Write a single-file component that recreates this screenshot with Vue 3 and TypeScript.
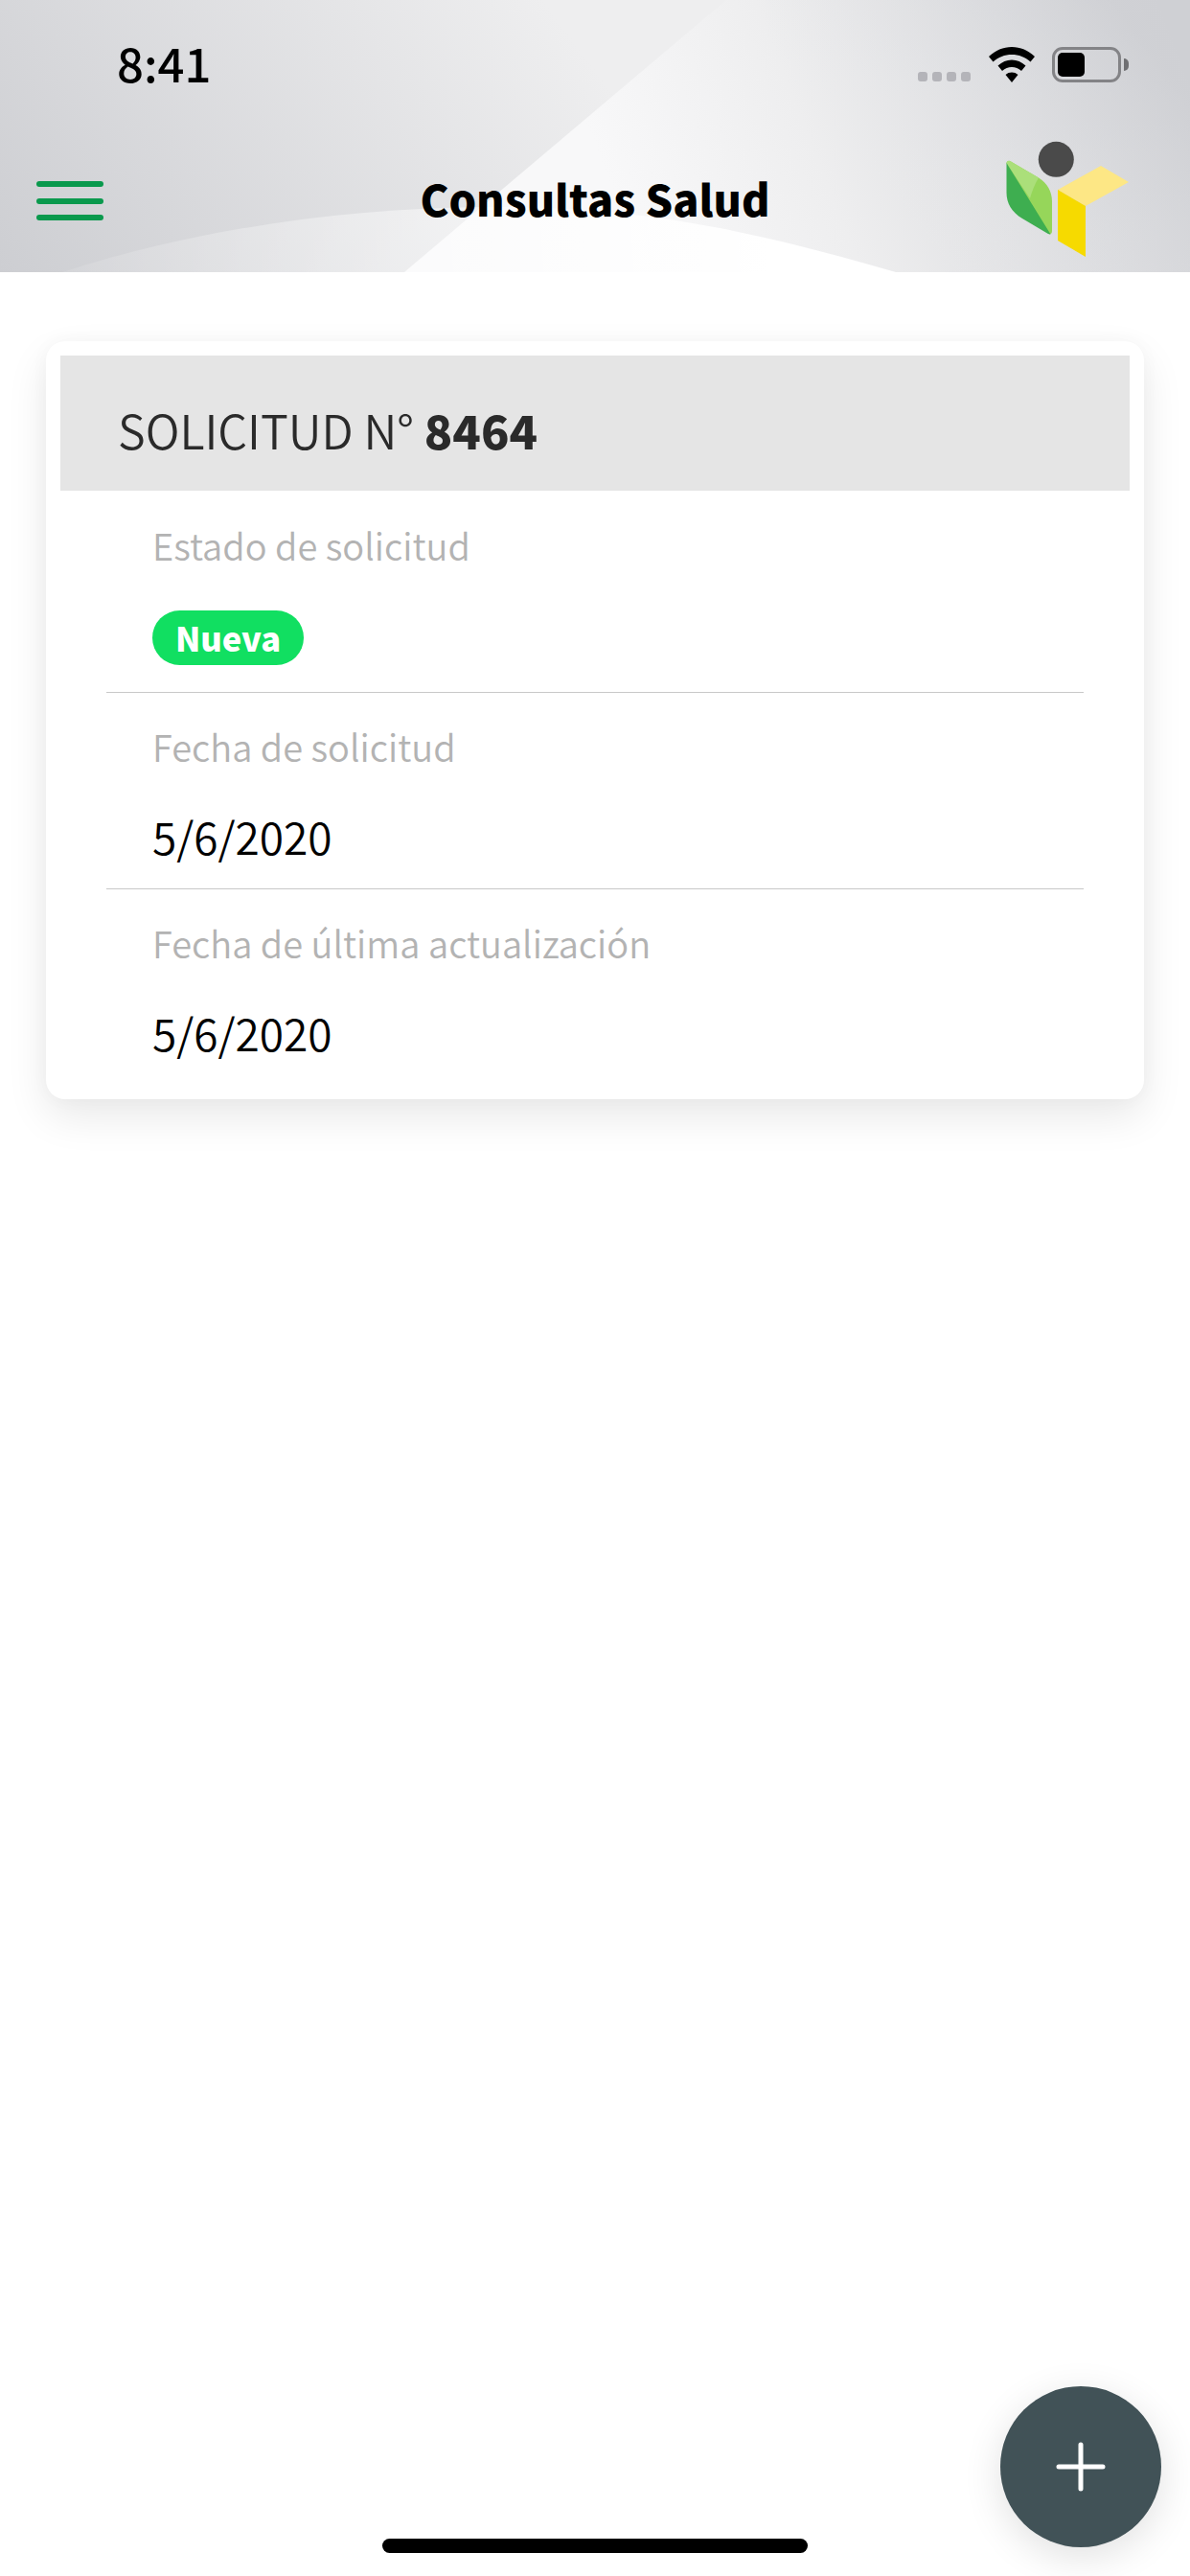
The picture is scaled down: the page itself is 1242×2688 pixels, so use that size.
<script setup lang="ts">
interface Field {
  label: string;
  value?: string;
  badge?: string;
}

const fields: Field[] = [
  { label: 'Estado de solicitud', badge: 'Nueva' },
  { label: 'Fecha de solicitud', value: '5/6/2020' },
  { label: 'Fecha de última actualización', value: '5/6/2020' },
];
</script>

<template>
  <div class="screen">
    <header class="header">
      <svg class="header-bg" width="1242" height="284" viewBox="0 0 1242 284" aria-hidden="true">
        <defs>
          <linearGradient id="bgLeft" gradientUnits="userSpaceOnUse" x1="0" y1="284" x2="500" y2="-90">
            <stop offset="0" stop-color="#cdced2" />
            <stop offset="1" stop-color="#eeeeef" />
          </linearGradient>
          <linearGradient id="bgRight" gradientUnits="userSpaceOnUse" x1="640" y1="200" x2="1200" y2="-20">
            <stop offset="0" stop-color="#f8f8f9" />
            <stop offset="0.35" stop-color="#eeeeef" />
            <stop offset="1" stop-color="#cfd0d4" />
          </linearGradient>
          <linearGradient id="bgBottomRight" gradientUnits="userSpaceOnUse" x1="1242" y1="100" x2="1000" y2="300">
            <stop offset="0" stop-color="#cfd0d4" stop-opacity="0.75" />
            <stop offset="1" stop-color="#ecedef" stop-opacity="0" />
          </linearGradient>
          <linearGradient id="swoosh" gradientUnits="userSpaceOnUse" x1="70" y1="284" x2="800" y2="240">
            <stop offset="0" stop-color="#ffffff" stop-opacity="0.1" />
            <stop offset="0.55" stop-color="#ffffff" stop-opacity="0.5" />
            <stop offset="1" stop-color="#ffffff" stop-opacity="1" />
          </linearGradient>
        </defs>
        <rect width="1242" height="284" fill="url(#bgLeft)" />
        <polygon points="758,0 1242,0 1242,284 422,284" fill="url(#bgRight)" />
        <rect x="800" y="0" width="442" height="284" fill="url(#bgBottomRight)" />
        <path d="M65 284C200 240 360 216 520 216C680 216 800 245 935 284Z" fill="url(#swoosh)" />
      </svg>

      <div class="status-bar">
        <span class="time">8:41</span>
        <div class="status-icons">
          <div class="signal">
            <i></i><i></i><i></i><i></i>
          </div>
          <svg class="wifi" width="48" height="37" viewBox="0 0 48 37" aria-hidden="true">
            <path d="M24 0C33 0 41 3.500 48 10L43.500 15.500C38 10.500 31.500 8 24 8C16.500 8 10 10.500 4.500 15.500L0 10C7 3.500 15 0 24 0Z" />
            <path d="M24 13.500C29.500 13.500 34 15.500 38.500 19.500L34 25C31 22.300 27.800 21 24 21C20.200 21 17 22.300 14 25L9.500 19.500C14 15.500 18.500 13.500 24 13.500Z" />
            <path d="M24 26.500C26.500 26.500 28.600 27.300 30.500 29L24 37L17.500 29C19.400 27.300 21.500 26.500 24 26.500Z" />
          </svg>
          <div class="battery">
            <div class="battery-body"><div class="battery-fill"></div></div>
            <div class="battery-tip"></div>
          </div>
        </div>
      </div>

      <nav class="nav">
        <button class="menu" type="button" aria-label="Menú">
          <span></span><span></span><span></span>
        </button>
        <h1 class="title">Consultas Salud</h1>
        <svg class="logo" width="128" height="121" viewBox="1050 147 128 121" aria-hidden="true">
          <circle cx="1102.300" cy="166.300" r="18.500" fill="#4a4a4a" />
          <path d="M1050.500 170.500C1050.500 168 1053 167 1055 168.500L1084 185.500C1093 191 1098 200 1098 210L1098 241C1098 244 1096 245 1094 243.800Z" fill="#96d65a" />
          <path d="M1050.500 170.500C1050.500 168 1053 167 1055 168.500L1084 185.500C1080 192 1077 200 1075 207Z" fill="#abdf7a" />
          <path d="M1050.500 170L1096.500 244.500C1095.500 244.700 1094.500 244.300 1093.500 243.700L1067 228C1056 221.500 1050.500 212 1050.500 201Z" fill="#3eae50" />
          <polygon points="1104,198 1149,173 1178,190 1133,215" fill="#fde785" />
          <polygon points="1104,198 1133,215 1133,268 1104,251" fill="#f6da00" />
        </svg>
      </nav>
    </header>

    <main class="content">
      <section class="card">
        <div class="card-head"><span>SOLICITUD N° <strong>8464</strong></span></div>
        <div v-for="field in fields" :key="field.label" class="row">
          <div class="label">{{ field.label }}</div>
          <div v-if="field.badge" class="badge-line"><span class="badge">{{ field.badge }}</span></div>
          <div v-else class="value">{{ field.value }}</div>
        </div>
      </section>
    </main>

    <button class="fab" type="button" aria-label="Agregar">
      <svg width="52" height="52" viewBox="0 0 52 52" aria-hidden="true">
        <path d="M3 26H49M26 3V49" stroke="#fff" stroke-width="5" stroke-linecap="round" fill="none" />
      </svg>
    </button>
    <div class="home-indicator"></div>
  </div>
</template>

<style scoped>
.screen {
  position: relative;
  width: 1242px;
  height: 2688px;
  overflow: hidden;
  background: #fff;
  font-family: "Noto Sans CJK JP", "Noto Sans", sans-serif;
}

.header {
  position: relative;
  height: 284px;
  display: flex;
  flex-direction: column;
}

.header-bg {
  position: absolute;
  inset: 0;
}

.status-bar {
  position: relative;
  height: 136px;
  display: flex;
  align-items: flex-start;
  justify-content: space-between;
  padding: 32px 64px 0 122px;
  box-sizing: border-box;
}

.time {
  font-size: 49px;
  line-height: 66px;
  font-weight: 500;
  color: #000;
}

.status-icons {
  display: flex;
  align-items: flex-end;
  margin-top: 17px;
}

.signal {
  display: flex;
  gap: 5px;
  margin-right: 19px;
  margin-bottom: 1px;
}

.signal i {
  width: 10px;
  height: 10px;
  border-radius: 3px;
  background: #b4b4b9;
}

.wifi {
  fill: #000;
  margin-right: 18px;
}

.battery {
  display: flex;
  align-items: center;
  gap: 3px;
}

.battery-body {
  width: 72px;
  height: 37px;
  box-sizing: border-box;
  border: 3px solid #838386;
  border-radius: 11px;
  padding: 3px;
}

.battery-fill {
  width: 28px;
  height: 25px;
  background: #000;
  border-radius: 5px;
}

.battery-tip {
  width: 5px;
  height: 13px;
  background: #6f6f72;
  border-radius: 0 6px 6px 0;
}

.nav {
  position: relative;
  height: 148px;
  display: grid;
  grid-template-columns: 1fr auto 1fr;
  align-items: start;
  padding: 0 38px;
}

.menu {
  justify-self: start;
  display: flex;
  flex-direction: column;
  gap: 11.500px;
  width: 70px;
  margin-top: 53px;
  padding: 0;
  border: 0;
  background: none;
}

.menu span {
  display: block;
  height: 6px;
  border-radius: 3px;
  background: #0a994d;
}

.title {
  margin: 37px 0 0;
  font-size: 45px;
  line-height: 68px;
  font-weight: 900;
  color: #000;
}

.logo {
  justify-self: end;
  margin-top: 11px;
  margin-right: 26px;
}

.content {
  padding: 72px 48px 0;
}

.card {
  background: #fff;
  border-radius: 20px;
  padding: 15px;
  box-shadow: 0 18px 44px rgba(0, 0, 0, 0.09), 0 0 20px rgba(0, 0, 0, 0.03);
}

.card-head {
  height: 141px;
  display: flex;
  align-items: center;
  padding-left: 60px;
  background: #e5e5e5;
  font-size: 48.500px;
  font-weight: 350;
  color: #2a2a2a;
}

.card-head span {
  position: relative;
  top: 6px;
}

.card-head strong {
  font-weight: 900;
}

.row {
  margin: 0 48px;
  padding: 38px 0 22px 48px;
  display: flex;
  flex-direction: column;
  gap: 45px;
}

.row + .row {
  border-top: 1px solid #c8c8c8;
  padding-top: 37px;
}

.label {
  height: 40px;
  line-height: 38px;
  font-size: 38px;
  font-weight: 350;
  color: #b3b3b3;
}

.value {
  height: 60px;
  line-height: 54px;
  font-size: 46px;
  font-weight: 350;
  color: #000;
}

.badge-line {
  display: flex;
  margin: 2px 0 6px 0;
}

.badge {
  width: 158px;
  height: 57px;
  box-sizing: border-box;
  padding-bottom: 2px;
  border-radius: 29px;
  display: flex;
  align-items: center;
  justify-content: center;
  background: #11df61;
  color: #fff;
  font-size: 34.500px;
  line-height: 50px;
  font-weight: 900;
}

.fab {
  position: absolute;
  left: 1044px;
  top: 2490px;
  width: 168px;
  height: 168px;
  display: flex;
  align-items: center;
  justify-content: center;
  padding: 0;
  border: 0;
  border-radius: 50%;
  background: #415257;
  box-shadow: 0 10px 40px rgba(0, 0, 0, 0.12);
}

.home-indicator {
  position: absolute;
  left: 399px;
  top: 2649px;
  width: 444px;
  height: 15px;
  border-radius: 8px;
  background: #000;
}
</style>
